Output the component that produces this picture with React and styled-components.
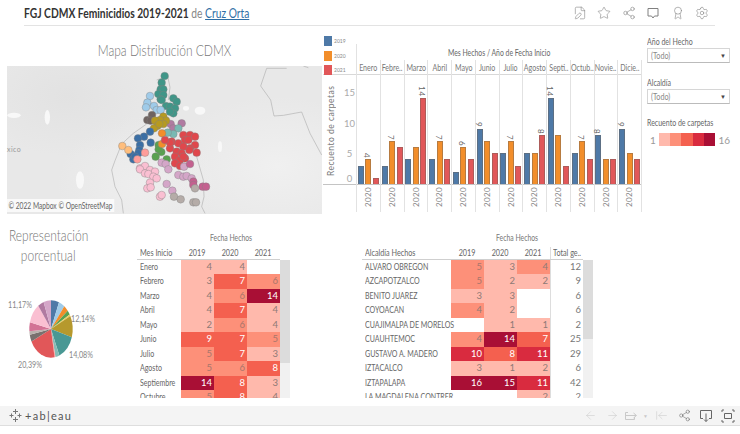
import React from "react";
import styled, { createGlobalStyle } from "styled-components";
import {
  ArrowLeft,
  ArrowRight,
  ArrowLeftToLine,
  Award,
  FilePen,
  Settings,
  Share2,
  Star,
} from "lucide-react";

const sans = `"Lato", "Liberation Sans", sans-serif`;

const GlobalStyle = createGlobalStyle`
  html, body { margin: 0; padding: 0; background: #fff; }
  body { font-family: ${sans}; color: #666; }
`;

const RAMP = ["#ffb9ac", "#fd9079", "#f4604f", "#d92b3f", "#a90f35"];

const months = [
  { name: "Enero", bars: [3, 4, 1], mark: 1 },
  { name: "Febre..", bars: [3, 7, 6], mark: 1 },
  { name: "Marzo", bars: [4, 6, 14], mark: 2 },
  { name: "Abril", bars: [4, 7, 4], mark: 1 },
  { name: "Mayo", bars: [2, 6, 4], mark: 1 },
  { name: "Junio", bars: [9, 7, 5], mark: 0 },
  { name: "Julio", bars: [5, 7, 3], mark: 1 },
  { name: "Agosto", bars: [5, 5, 8], mark: 2 },
  { name: "Septi..", bars: [14, 8, 3], mark: 0 },
  { name: "Octub..", bars: [5, 7, 4], mark: 1 },
  { name: "Novie..", bars: [8, 4, 4], mark: 0 },
  { name: "Dicie..", bars: [9, 5, 4], mark: 0 },
];

const monthRows = [
  ["Enero", 4, 4, null],
  ["Febrero", 3, 7, 6],
  ["Marzo", 4, 6, 14],
  ["Abril", 4, 7, 4],
  ["Mayo", 2, 6, 4],
  ["Junio", 9, 7, 5],
  ["Julio", 5, 7, 3],
  ["Agosto", 5, 6, 8],
  ["Septiembre", 14, 8, 3],
  ["Octubre", 5, 8, 4],
];

const alcaldiaRows = [
  ["ALVARO OBREGON", 5, 3, 4, 12],
  ["AZCAPOTZALCO", 5, 2, 2, 9],
  ["BENITO JUAREZ", 3, 3, null, 6],
  ["COYOACAN", 4, 2, null, 6],
  ["CUAJIMALPA DE MORELOS", null, 1, 1, 2],
  ["CUAUHTEMOC", 4, 14, 7, 25],
  ["GUSTAVO A. MADERO", 10, 8, 11, 29],
  ["IZTACALCO", 3, 1, 2, 6],
  ["IZTAPALAPA", 16, 15, 11, 42],
  ["LA MAGDALENA CONTRER", null, null, 2, 2],
];

const clusters = [
  { color: "#3f9688", pts: [[494,228],[485,248],[482,268],[490,268],[475,282],[490,285],[482,298],[498,318],[520,295],[530,305],[510,320],[525,325],[520,340],[510,335],[485,300]] },
  { color: "#9fcbe9", pts: [[450,288],[442,308],[462,318],[438,322],[470,330],[482,330]] },
  { color: "#6f6360", pts: [[442,360],[456,345],[452,362]] },
  { color: "#b07aa1", pts: [[512,372],[545,370],[520,385]] },
  { color: "#b69a20", pts: [[490,350],[498,362],[480,360],[465,362],[472,378],[462,385],[490,372],[478,372]] },
  { color: "#79b9b3", pts: [[535,385],[520,402],[503,398]] },
  { color: "#3b6fa5", pts: [[450,395],[432,410],[414,415],[420,435],[418,450],[452,428],[415,460],[392,462],[400,478],[405,470]] },
  { color: "#ffbe7d", pts: [[367,438],[385,450]] },
  { color: "#ff9d9a", pts: [[435,458],[412,478]] },
  { color: "#59a14f", pts: [[476,435],[484,456],[467,470],[500,478],[476,448]] },
  { color: "#f28e2b", pts: [[486,400],[486,432]] },
  { color: "#e0474c", pts: [[550,405],[570,405],[585,410],[555,420],[535,430],[515,425],[510,445],[565,420],[585,435],[570,445],[550,440],[530,455],[590,458],[568,450],[545,460],[525,470],[555,475],[540,480],[525,490],[540,498],[550,470],[510,428],[495,420]] },
  { color: "#d4a6c8", pts: [[485,488],[497,492],[505,508],[535,525],[550,530],[560,528],[575,535],[500,552],[517,572],[552,500]] },
  { color: "#c4608f", pts: [[570,492],[580,545],[580,555],[608,560],[618,560]] },
  { color: "#fabfd2", pts: [[420,505],[435,498],[450,510],[465,515],[420,508],[435,520],[445,522],[460,530],[470,535],[450,548],[442,565],[452,562],[480,590],[485,585]] },
  { color: "#b5aca8", pts: [[522,590],[542,598],[585,565],[580,607],[588,607]] },
];

const slices = [
  ["#4e79a7", 6],
  ["#a0cbe8", 4.5],
  ["#f28e2b", 3.5],
  ["#59a14f", 2.5],
  ["#f1ce63", 1],
  ["#b6992d", 12.14],
  ["#499894", 14.08],
  ["#86bcb6", 3],
  ["#ff9d9a", 0.7],
  ["#e15759", 20.39],
  ["#79706e", 4],
  ["#bab0ac", 2],
  ["#d37295", 5],
  ["#fabfd2", 11.17],
  ["#b07aa1", 4.5],
  ["#d4a6c8", 5.5],
];

const bandColor = (value, mediumFrom) => {
  if (value === null) return "transparent";
  if (value >= 14) return RAMP[4];
  if (value >= 10) return RAMP[3];
  if (value >= 7) return RAMP[2];
  if (value >= mediumFrom) return RAMP[1];
  return RAMP[0];
};

const piePath = (start, end) => {
  const cx = 51, cy = 44, rx = 21.7, ry = 28.7;
  const a = (start / 100) * Math.PI * 2;
  const b = (end / 100) * Math.PI * 2;
  const x0 = cx + rx * Math.sin(a), y0 = cy - ry * Math.cos(a);
  const x1 = cx + rx * Math.sin(b), y1 = cy - ry * Math.cos(b);
  return `M${cx} ${cy}L${x0} ${y0}A${rx} ${ry} 0 ${end - start > 50 ? 1 : 0} 1 ${x1} ${y1}Z`;
};

// the reference uses a condensed face, no such font here so squeeze Lato
const Narrow = styled.span`
  display: inline-block;
  flex-shrink: 0;
  white-space: nowrap;
  transform: scaleX(${(p) => p.$scale || 0.76});
  transform-origin: ${(p) => p.$origin || "left"} center;
`;

const Page = styled.div`
  width: 740px;
  height: 434px;
  overflow: hidden;
  display: flex;
  flex-direction: column;
`;

const Header = styled.header`
  height: 25px;
  margin: 0 25px 0 24px;
  border-bottom: 1px solid #e3e3e3;
  display: flex;
  align-items: center;
  justify-content: space-between;
`;

const Title = styled.div`
  font-size: 13px;
  line-height: 18px;
  color: #888;
  white-space: nowrap;
  transform: scaleX(0.79);
  transform-origin: left center;
  b { color: #333; font-weight: 700; }
  a { color: #2f6ea5; text-decoration: underline; }
`;

const HeaderIcons = styled.div`
  display: flex;
  gap: 10.5px;
  margin-right: 6px;
  color: #808080;
  svg { display: block; }
`;

const TopRow = styled.section`
  height: 199px;
  display: flex;
  padding-left: 7px;
`;

const MapPanel = styled.div`
  width: 315px;
  height: 188px;
`;

const PanelTitle = styled.h2`
  margin: 0;
  font-weight: 300;
  font-size: 15px;
  line-height: 20px;
  color: #777;
  display: flex;
  justify-content: center;
`;

const MapTitle = styled(PanelTitle)`
  padding-top: 14px;
  height: 26px;
`;

const MapCanvas = styled.div`
  position: relative;
  height: 148px;
  background:
    radial-gradient(ellipse 90px 60px at 60px 30px, #e2e2e2, transparent),
    radial-gradient(ellipse 110px 70px at 270px 100px, #f0f0f0, transparent),
    radial-gradient(ellipse 80px 70px at 130px 120px, #eeeeee, transparent),
    #e8e8e8;
  svg { display: block; }
`;

const Attribution = styled.span`
  position: absolute;
  left: 0;
  bottom: 2px;
  padding: 1px 2px;
  font-size: 9px;
  line-height: 11px;
  color: #666;
  white-space: nowrap;
  background: rgba(255, 255, 255, 0.75);
  transform: scaleX(0.74);
  transform-origin: left bottom;
`;

const MapLabel = styled.span`
  position: absolute;
  left: 0;
  top: 79px;
  font-size: 7px;
  color: #999;
  letter-spacing: 0.4px;
`;

const ChartPanel = styled.div`
  width: 319px;
  margin-left: 1px;
  display: flex;
`;

const Gutter = styled.div`
  width: 33px;
  display: flex;
  flex-direction: column;
`;

const Legend = styled.div`
  height: 38px;
  padding-top: 10px;
  display: flex;
  flex-direction: column;
  gap: 4.5px;
  border-bottom: 1px solid #d8d8d8;
`;

const LegendItem = styled.div`
  display: flex;
  align-items: center;
  gap: 2px;
  height: 10px;
  font-size: 5px;
  color: #888;
  i {
    width: 8px;
    height: 10px;
    background: ${(p) => p.$color};
    margin-left: 1px;
  }
`;

const ValueAxis = styled.div`
  height: 109px;
  display: flex;
  border-bottom: 1px solid #c4c4c4;
`;

const AxisTitle = styled.div`
  width: 20px;
  writing-mode: vertical-rl;
  transform: rotate(180deg);
  text-align: center;
  font-size: 8.5px;
  letter-spacing: 0.5px;
  line-height: 16px;
  color: #777;
  padding-bottom: 2px;
  box-sizing: border-box;
  white-space: nowrap;
`;

const Ticks = styled.div`
  flex: 1;
  padding-top: 3px;
  font-size: 9.5px;
  color: #aaa;
  text-align: center;
  span { display: block; height: 30.67px; line-height: 30.67px; }
  span:last-child { height: 18px; line-height: 18px; }
`;

const ChartBody = styled.div`
  width: 286px;
  display: flex;
  flex-direction: column;
  margin-top: 18px;
  border-left: 1px solid #e2e2e2;
  box-sizing: border-box;
  height: 168px;
`;

const ChartHeading = styled.div`
  height: 16px;
  line-height: 18px;
  font-size: 9.5px;
  color: #666;
  display: flex;
  justify-content: center;
`;

const Months = styled.div`
  flex: 1;
  display: flex;
`;

const MonthColumn = styled.div`
  flex: 1;
  min-width: 0;
  display: flex;
  flex-direction: column;
  border-right: 1px solid #e2e2e2;
`;

const MonthName = styled.div`
  height: 14px;
  line-height: 15px;
  font-size: 9.5px;
  color: #777;
  display: flex;
  justify-content: center;
  border-bottom: 1px solid #d8d8d8;
`;

const Plot = styled.div`
  height: 109px;
  display: flex;
  align-items: flex-end;
  gap: 1.3px;
  padding: 0 0.8px;
  border-bottom: 1px solid #c4c4c4;
`;

const Bar = styled.div`
  position: relative;
  flex: 1;
  box-sizing: border-box;
  height: ${(p) => p.$value * 6.13}px;
  background: ${(p) => p.$color};
  border: 1px solid rgba(110, 100, 90, 0.45);
  border-bottom: 0;
`;

const BarValue = styled.span`
  position: absolute;
  left: -2px;
  right: -2px;
  bottom: 100%;
  padding-bottom: 2px;
  writing-mode: vertical-rl;
  text-align: left;
  font-size: 8px;
  line-height: 10px;
  letter-spacing: 0.8px;
  color: #666;
`;

const YearLabel = styled.div`
  flex: 1;
  writing-mode: vertical-rl;
  transform: rotate(180deg);
  text-align: right;
  line-height: 22px;
  font-size: 8px;
  letter-spacing: 0.4px;
  color: #888;
  padding-bottom: 2px;
`;

const Filters = styled.aside`
  width: 83px;
  margin-left: 5px;
  padding-top: 9px;
  display: flex;
  flex-direction: column;
`;

const FilterLabel = styled.div`
  font-size: 10px;
  line-height: 13px;
  color: #666;
`;

const Select = styled.div`
  height: 13px;
  margin: 0 0 12.5px;
  padding: 0 3px;
  display: flex;
  justify-content: space-between;
  align-items: center;
  border: 1px solid #d6d6d6;
  border-bottom-color: #bbb;
  font-size: 9px;
  color: #888;
  i { font-style: normal; font-size: 6px; color: #444; }
`;

const RampRow = styled.div`
  display: flex;
  align-items: center;
  gap: 3px;
  margin-top: 4px;
  padding-left: 3px;
  font-size: 10px;
  color: #999;
`;

const RampScale = styled.div`
  display: flex;
  width: 63px;
  height: 13px;
`;

const RampStop = styled.div`
  flex: 1;
  background: ${(p) => p.$color};
`;

const BottomRow = styled.section`
  height: 173px;
  display: grid;
  grid-template-columns: 137px 153px 72px 231px;
`;

const PiePanel = styled.div`
  width: 97px;
`;

const PieChart = styled.svg`
  display: block;
  margin-top: 20px;
  overflow: visible;
  text {
    font-size: 10px;
    fill: #888;
    font-family: ${sans};
  }
`;

const TableBlock = styled.div`
  height: 173px;
  overflow: hidden;
`;

const GroupHead = styled.div`
  height: 16px;
  padding-top: 6px;
  padding-left: ${(p) => p.$inset}px;
  font-size: 9px;
  line-height: 14px;
  color: #777;
`;

const GridRow = styled.div`
  display: grid;
  grid-template-columns: ${(p) => p.$cols};
  height: 14.45px;
  font-size: 9.5px;
  line-height: 14.45px;
`;

const HeadRow = styled(GridRow)`
  height: 12px;
  line-height: 12px;
  border-bottom: 1px solid #cfcfcf;
  color: #666;
`;

const HeadCell = styled.div`
  display: flex;
  justify-content: ${(p) => (p.$left ? "flex-start" : "center")};
  padding-left: ${(p) => (p.$left ? "3px" : "0")};
  ${(p) => p.$total && "border-left: 1px solid #ddd; justify-content: flex-start; padding-left: 2px;"}
`;

const RowName = styled.div`
  padding-left: 3px;
  color: #666;
`;

const ValueCell = styled.div`
  padding-right: 2px;
  text-align: right;
  background: ${(p) => p.$bg};
  color: ${(p) => (p.$value >= 7 ? "#fff" : p.$value >= 5 ? "#a8766c" : "#8f7a76")};
`;

const TotalCell = styled.div`
  padding-right: 2px;
  text-align: right;
  color: #777;
  border-left: 1px solid #ddd;
`;

const TableBody = styled.div`
  display: flex;
  height: 139px;
  overflow: hidden;
`;

const Rows = styled.div`
  width: ${(p) => p.$width}px;
`;

const ScrollTrack = styled.div`
  width: 10px;
  background: #f1f1f1;
`;

const ScrollThumb = styled.div`
  height: ${(p) => p.$height}px;
  background: #dcdcdc;
`;

const Footer = styled.footer`
  height: 19px;
  margin-top: 8px;
  background: #f4f4f4;
  border-bottom: 1px solid #dedede;
  display: flex;
  align-items: center;
  justify-content: space-between;
  padding: 0 5px 0 9px;
`;

const Logo = styled.div`
  display: flex;
  align-items: center;
  gap: 3px;
  font-size: 11px;
  letter-spacing: 1.3px;
  color: #555;
`;

const FooterIcons = styled.div`
  display: flex;
  align-items: center;
  svg { display: block; }
`;

const FooterIcon = styled.span`
  display: flex;
  color: ${(p) => (p.$on ? "#666" : "#c9c9c9")};
  margin-left: ${(p) => p.$gap || 0}px;
`;

const Caret = styled.span`
  margin-left: 5px;
  font-size: 5px;
  color: #c9c9c9;
`;

const colors = ["#4e79a7", "#f28e2b", "#e15759"];

const Table = ({ cols, width, nameHead, rows, mediumFrom, thumb, inset, total }) => (
  <TableBlock>
    <GroupHead $inset={inset}><Narrow>Fecha Hechos</Narrow></GroupHead>
    <HeadRow $cols={cols} style={{ width }}>
      <HeadCell $left><Narrow>{nameHead}</Narrow></HeadCell>
      <HeadCell><Narrow $origin="center">2019</Narrow></HeadCell>
      <HeadCell><Narrow $origin="center">2020</Narrow></HeadCell>
      <HeadCell><Narrow $origin="center">2021</Narrow></HeadCell>
      {total && <HeadCell $total><Narrow>Total ge..</Narrow></HeadCell>}
    </HeadRow>
    <TableBody>
      <Rows $width={width}>
        {rows.map((r) => (
          <GridRow $cols={cols} key={r[0]}>
            <RowName><Narrow $scale={0.74}>{r[0]}</Narrow></RowName>
            {r.slice(1, 4).map((v, i) => (
              <ValueCell key={i} $value={v} $bg={bandColor(v, mediumFrom)}>
                {v}
              </ValueCell>
            ))}
            {total && <TotalCell>{r[4]}</TotalCell>}
          </GridRow>
        ))}
      </Rows>
      <ScrollTrack>
        <ScrollThumb $height={thumb} />
      </ScrollTrack>
    </TableBody>
  </TableBlock>
);

const MapDrawing = () => (
  <svg width="315" height="148" viewBox="21 198 945 444">
    <g fill="#f8f8f8">
      <ellipse cx="600" cy="332" rx="16" ry="12" />
      <ellipse cx="558" cy="325" rx="9" ry="7" />
      <ellipse cx="42" cy="346" rx="20" ry="8" />
      <ellipse cx="142" cy="352" rx="8" ry="22" />
      <ellipse cx="240" cy="540" rx="12" ry="26" />
      <ellipse cx="660" cy="440" rx="6" ry="16" />
    </g>
    <g fill="none" stroke="#999" strokeWidth="1.4">
      <path d="M470 240L503 228L510 262L505 300M440 372L400 400L365 432L345 482L335 510L345 560L365 600L370 640M590 470L610 540L612 590L605 620L615 640" />
      <path d="M800 205L782 258L812 300L822 348L850 346L905 336L930 400L965 465M800 205L860 205M910 198L925 203" />
    </g>
    {clusters.map((c) =>
      c.pts.map(([x, y], i) => (
        <circle key={c.color + i} cx={x} cy={y} r="11.5" fill={c.color} stroke="#808080" strokeWidth="1.2" />
      ))
    )}
  </svg>
);

const PieLabel = ({ x, y, children }) => (
  <text x={x} y={y} textLength="24" lengthAdjust="spacingAndGlyphs">{children}</text>
);

const Pie = () => {
  let at = 0;
  return (
    <PieChart width="97" height="90">
      {slices.map(([color, pct]) => {
        const d = piePath(at, at + pct);
        at += pct;
        return <path key={color} d={d} fill={color} />;
      })}
      <PieLabel x="8" y="23">11,17%</PieLabel>
      <PieLabel x="71" y="37">12,14%</PieLabel>
      <PieLabel x="69" y="73">14,08%</PieLabel>
      <PieLabel x="18" y="83">20,39%</PieLabel>
    </PieChart>
  );
};

const CommentIcon = () => (
  <svg width="14" height="14" viewBox="0 0 14 14" fill="none" stroke="currentColor">
    <path d="M2 2.5h10v7.5H8.5L7 12 5.5 10H2z" />
  </svg>
);

const DownloadIcon = () => (
  <svg width="14" height="14" viewBox="0 0 14 14" fill="none" stroke="currentColor">
    <path d="M4 9.5H1.5v-8h11v8H10M7 4.5v8M5 10.5l2 2 2-2" />
  </svg>
);

const ReplayIcon = () => (
  <svg width="14" height="14" viewBox="0 0 14 14" fill="none" stroke="currentColor">
    <path d="M4 3.5H1.5v7h9V8M1 6.5h11M9.5 4l3 2.5-3 2.5" />
  </svg>
);

const FullscreenIcon = () => (
  <svg width="14" height="14" viewBox="0 0 14 14" fill="none" stroke="currentColor">
    <path d="M3.5 4.5h7v5h-7zM1 3V1h2M11 1h2v2M1 11v2h2M11 13h2v-2" />
  </svg>
);

const TableauMark = () => (
  <svg width="13" height="13" viewBox="0 0 13 13" stroke="#777" strokeWidth="1">
    <path d="M6.5 0v5M4 2.5h5M6.5 8v5M4 10.5h5M2.5 4.5v4M0.5 6.5h4M10.5 4.5v4M8.5 6.5h4" />
  </svg>
);

export default function App() {
  return (
    <Page>
      <GlobalStyle />
      <Header>
        <Title>
          <b>FGJ CDMX Feminicidios 2019-2021</b> de <a href="#autor">Cruz Orta</a>
        </Title>
        <HeaderIcons>
          <FilePen size={14} strokeWidth={1} />
          <Star size={14} strokeWidth={1} />
          <Share2 size={14} strokeWidth={1} />
          <CommentIcon />
          <Award size={14} strokeWidth={1} />
          <Settings size={14} strokeWidth={1} />
        </HeaderIcons>
      </Header>

      <TopRow>
        <MapPanel>
          <MapTitle><Narrow $scale={0.8} $origin="center">Mapa Distribución CDMX</Narrow></MapTitle>
          <MapCanvas>
            <MapDrawing />
            <MapLabel>xico</MapLabel>
            <Attribution>© 2022 Mapbox © OpenStreetMap</Attribution>
          </MapCanvas>
        </MapPanel>

        <ChartPanel>
          <Gutter>
            <Legend>
              <LegendItem $color={colors[0]}><i />2019</LegendItem>
              <LegendItem $color={colors[1]}><i />2020</LegendItem>
              <LegendItem $color={colors[2]}><i />2021</LegendItem>
            </Legend>
            <ValueAxis>
              <AxisTitle>Recuento de carpetas</AxisTitle>
              <Ticks>
                <span>15</span>
                <span>10</span>
                <span>5</span>
                <span>0</span>
              </Ticks>
            </ValueAxis>
          </Gutter>
          <ChartBody>
            <ChartHeading><Narrow $scale={0.72} $origin="center">Mes Hechos / Año de Fecha Inicio</Narrow></ChartHeading>
            <Months>
              {months.map((m) => (
                <MonthColumn key={m.name}>
                  <MonthName><Narrow $scale={0.74} $origin="center">{m.name}</Narrow></MonthName>
                  <Plot>
                    {m.bars.map((v, i) => (
                      <Bar key={i} $value={v} $color={colors[i]}>
                        {i === m.mark && <BarValue>{v}</BarValue>}
                      </Bar>
                    ))}
                  </Plot>
                  <YearLabel>2020</YearLabel>
                </MonthColumn>
              ))}
            </Months>
          </ChartBody>
        </ChartPanel>

        <Filters>
          <FilterLabel><Narrow $scale={0.7}>Año del Hecho</Narrow></FilterLabel>
          <Select><Narrow $scale={0.8}>(Todo)</Narrow><i>▼</i></Select>
          <FilterLabel><Narrow $scale={0.7}>Alcaldía</Narrow></FilterLabel>
          <Select><Narrow $scale={0.8}>(Todo)</Narrow><i>▼</i></Select>
          <FilterLabel><Narrow $scale={0.7}>Recuento de carpetas</Narrow></FilterLabel>
          <RampRow>
            1
            <RampScale>
              {RAMP.map((c) => <RampStop key={c} $color={c} />)}
            </RampScale>
            16
          </RampRow>
        </Filters>
      </TopRow>

      <BottomRow>
        <PiePanel>
          <PanelTitle><Narrow $scale={0.8} $origin="center">Representación</Narrow></PanelTitle>
          <PanelTitle><Narrow $scale={0.8} $origin="center">porcentual</Narrow></PanelTitle>
          <Pie />
        </PiePanel>
        <Table
          cols="44px 33px 33px 33px"
          width={143}
          nameHead="Mes Inicio"
          rows={monthRows}
          mediumFrom={5}
          thumb={103}
          inset={73}
        />
        <div />
        <Table
          cols="89px 33px 33px 33px 33px"
          width={221}
          nameHead="Alcaldía Hechos"
          rows={alcaldiaRows}
          mediumFrom={4}
          thumb={79}
          inset={134}
          total
        />
      </BottomRow>

      <Footer>
        <Logo>
          <TableauMark />
          +ab|eau
        </Logo>
        <FooterIcons>
          <FooterIcon><ArrowLeft size={13} strokeWidth={1} /></FooterIcon>
          <FooterIcon $gap={9}><ArrowRight size={13} strokeWidth={1} /></FooterIcon>
          <FooterIcon $gap={5.5}><ReplayIcon /></FooterIcon>
          <Caret>▼</Caret>
          <FooterIcon $gap={6.5}><ArrowLeftToLine size={13} strokeWidth={1} /></FooterIcon>
          <FooterIcon $on $gap={10}><Share2 size={13} strokeWidth={1} /></FooterIcon>
          <FooterIcon $on $gap={8.5}><DownloadIcon /></FooterIcon>
          <FooterIcon $on $gap={8}><FullscreenIcon /></FooterIcon>
        </FooterIcons>
      </Footer>
    </Page>
  );
}
